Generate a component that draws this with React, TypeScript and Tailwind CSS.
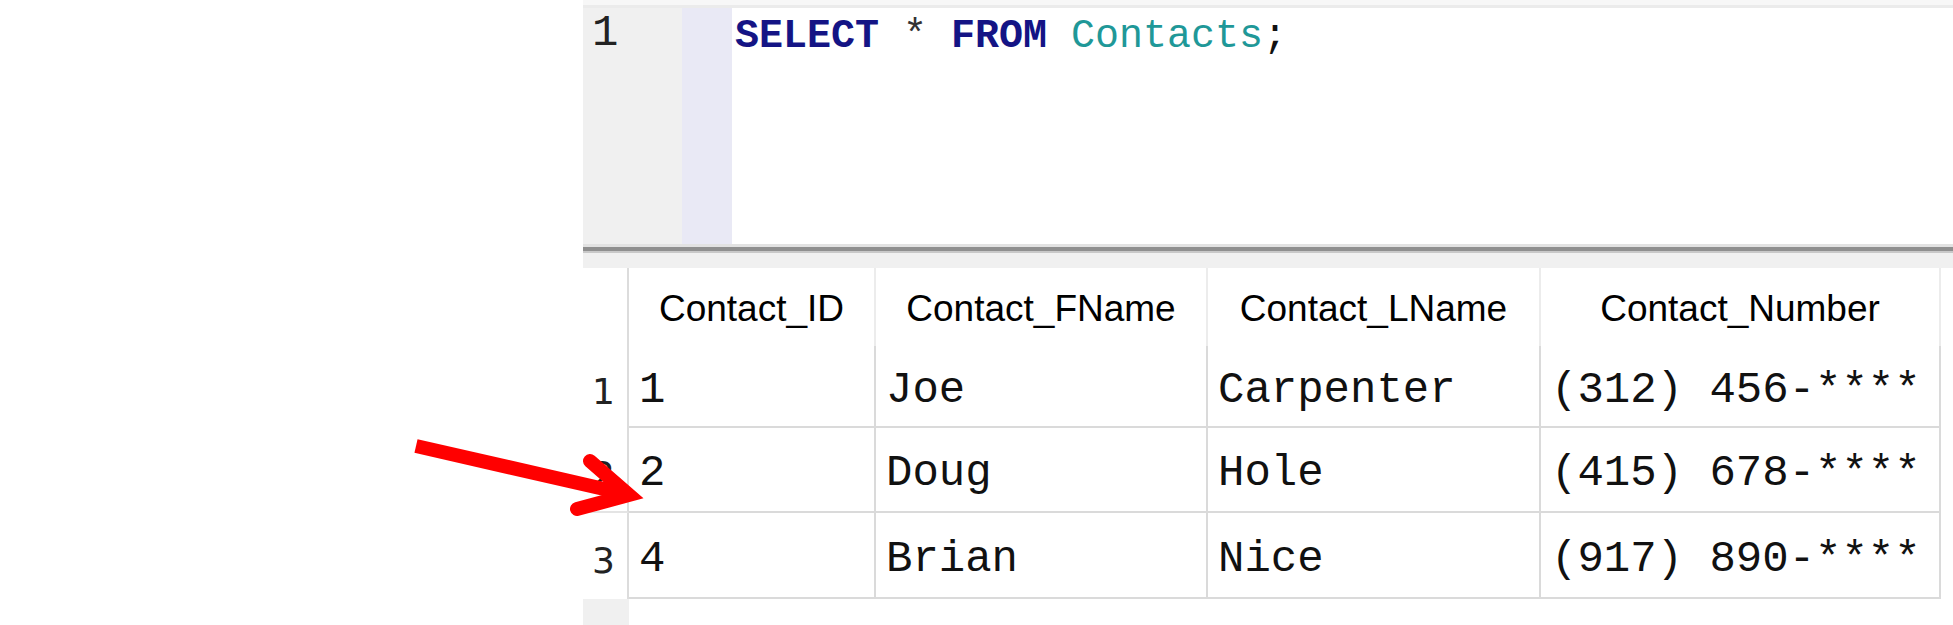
const MONO = "font-['Liberation_Mono','Courier_New',monospace]";

const rows = [
  { n: "1", id: "1", first: "Joe", last: "Carpenter", phone: "(312) 456-****", h: "h-[82px]", gb: "" },
  { n: "2", id: "2", first: "Doug", last: "Hole", phone: "(415) 678-****", h: "h-[85px]", gb: "border-b-2 border-b-[#e4e4e4]" },
  { n: "3", id: "4", first: "Brian", last: "Nice", phone: "(917) 890-****", h: "h-[86px]", gb: "" },
];

const headers = [
  { label: "Contact_ID", w: "w-[247px]" },
  { label: "Contact_FName", w: "w-[332px]" },
  { label: "Contact_LName", w: "w-[333px]" },
  { label: "Contact_Number", w: "w-[400px]" },
];

const cell = `flex items-center border-b-2 border-r-2 border-[#dadada] pl-[10px] pt-[7px] text-[44px] text-[#111] ${MONO}`;

function Arrow() {
  return (
    <svg className="pointer-events-none absolute left-0 top-0" width={1953} height={625}>
      <line x1={416} y1={446} x2={626} y2={494} stroke="#ff0000" strokeWidth={14} />
      <polyline
        points="590,461 629,495 577,509"
        fill="none"
        stroke="#ff0000"
        strokeWidth={14}
        strokeLinecap="round"
        strokeLinejoin="miter"
      />
    </svg>
  );
}

export default function App() {
  return (
    <div className="relative flex h-[625px] w-[1953px] overflow-hidden bg-white">
      <div className="w-[583px] shrink-0" />
      <div className="flex flex-1 flex-col">
        {/* top strip */}
        <div className="h-[8px] border-b-[3px] border-[#ebebeb] bg-[#f7f7f7]" />

        {/* editor */}
        <div className="flex h-[236px]">
          <div className={`w-[99px] bg-[#f0f0f0] pl-[9px] pt-[3px] text-[44px] leading-none text-[#222] ${MONO}`}>1</div>
          <div className="w-[50px] bg-[#e9e9f5]" />
          <div className={`flex-1 pl-[3px] pt-[9px] text-[40px] leading-none whitespace-pre ${MONO}`}>
            <span className="font-bold text-[#141485]">SELECT</span>
            <span className="text-[#333]"> * </span>
            <span className="font-bold text-[#141485]">FROM</span>
            <span className="text-[#1f9898]"> Contacts</span>
            <span className="text-[#111]">;</span>
          </div>
        </div>

        {/* splitter */}
        <div className="h-[3px] bg-[#e2e2e2]" />
        <div className="h-[4px] bg-[#8f8f8f]" />
        <div className="h-[2px] bg-[#c8c8c8]" />
        <div className="h-[15px] bg-[#f0f0f0]" />

        {/* result grid */}
        <div className="flex flex-1 flex-col">
          <div className="flex h-[78px] font-['Liberation_Sans',Arial,sans-serif] text-[37px] text-black">
            <div className="w-[46px] border-r-2 border-[#dcdcdc]" />
            {headers.map((h) => (
              <div key={h.label} className={`${h.w} flex items-center justify-center border-r-2 border-[#ececec] pt-[3px]`}>
                {h.label}
              </div>
            ))}
          </div>

          {rows.map((r) => (
            <div key={r.n} className={`flex ${r.h}`}>
              <div
                className={`flex w-[46px] items-center justify-end border-r-2 border-r-[#dcdcdc] pr-[12px] pt-[10px] font-['DejaVu_Sans',Verdana,sans-serif] text-[36px] text-[#222] ${r.gb}`}
              >
                {r.n}
              </div>
              <div className={`w-[247px] ${cell}`}>{r.id}</div>
              <div className={`w-[332px] ${cell}`}>{r.first}</div>
              <div className={`w-[333px] ${cell}`}>{r.last}</div>
              <div className={`w-[400px] whitespace-pre ${cell}`}>{r.phone}</div>
            </div>
          ))}

          <div className="flex flex-1">
            <div className="w-[46px] bg-[#f0f0f0]" />
          </div>
        </div>
      </div>
      <Arrow />
    </div>
  );
}
